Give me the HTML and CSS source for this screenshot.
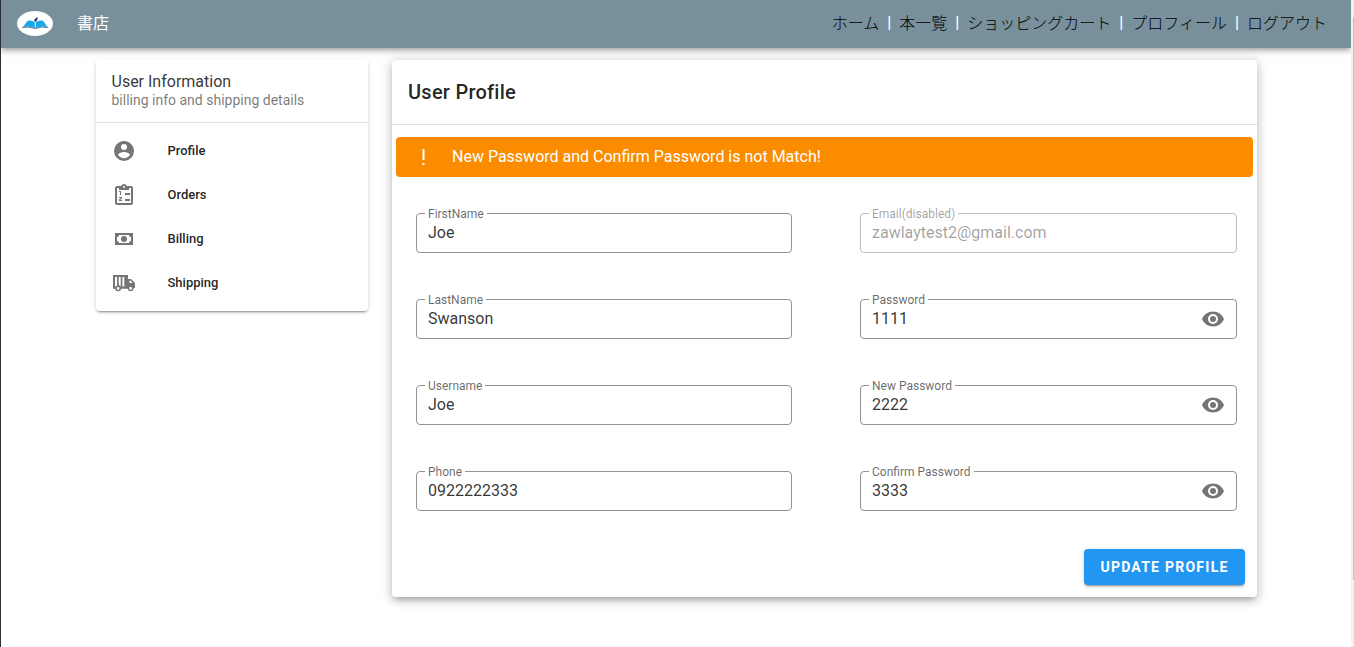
FILE: index.html
```
<!DOCTYPE html>
<html lang="ja">
<head>
<meta charset="utf-8">
<title>書店</title>
<link rel="stylesheet" href="styles.css">
</head>
<body>
<svg class="defs" aria-hidden="true">
  <symbol id="eye" viewBox="0 0 24 24"><path d="M12 9a3 3 0 0 0-3 3 3 3 0 0 0 3 3 3 3 0 0 0 3-3 3 3 0 0 0-3-3m0 8a5 5 0 0 1-5-5 5 5 0 0 1 5-5 5 5 0 0 1 5 5 5 5 0 0 1-5 5m0-12.500C7 4.500 2.730 7.610 1 12c1.730 4.390 6 7.500 11 7.500s9.270-3.110 11-7.500c-1.730-4.390-6-7.500-11-7.500z"/></symbol>
</svg>
<div class="app">
  <header class="bar">
    <svg class="logo" viewBox="0 0 36 26">
      <ellipse cx="18" cy="12.500" rx="18" ry="12.500" fill="#fff"/>
      <path d="M10.500 9.800Q15 8.800 18 11.500V17.200Q13 14.600 6 16Z" fill="#16a9e3"/>
      <path d="M26 9.800Q21.500 8.800 18.500 11.500V17.200Q23 14.600 30.500 16Z" fill="#16a9e3"/>
      <path d="M5.200 16.500Q13 15.200 17 17.300H19.500Q24 15.200 31.200 16.500" fill="none" stroke="#2a5188" stroke-width=".8"/>
      <path d="M17 10.300Q17.500 7.200 20.800 6Q20.800 8.800 18.800 10.800Z" fill="#30267c"/>
      <path d="M18.250 11V16.500" stroke="#d9f3ff" stroke-width=".8"/>
    </svg>
    <span class="brand">書店</span>
    <nav class="nav">
      <a>ホーム</a><i>|</i><a>本一覧</a><i>|</i><a>ショッピングカート</a><i>|</i><a>プロフィール</a><i>|</i><a>ログアウト</a>
    </nav>
  </header>
  <main class="content">
    <aside class="card side">
      <div class="side-head">
        <div class="side-title">User Information</div>
        <div class="side-sub">billing info and shipping details</div>
      </div>
      <ul class="menu">
        <li><svg class="icon" viewBox="0 0 24 24"><path d="M12 19.200c-2.500 0-4.710-1.280-6-3.200.03-2 4-3.100 6-3.100s5.970 1.100 6 3.100c-1.290 1.920-3.500 3.200-6 3.200M12 5a3 3 0 0 1 3 3 3 3 0 0 1-3 3 3 3 0 0 1-3-3 3 3 0 0 1 3-3m0-3A10 10 0 0 0 2 12a10 10 0 0 0 10 10 10 10 0 0 0 10-10C22 6.470 17.500 2 12 2z"/></svg><span>Profile</span></li>
        <li><svg class="icon" viewBox="0 0 24 24"><path d="M19 3H14.820C14.400 1.840 13.300 1 12 1S9.600 1.840 9.180 3H5A2 2 0 0 0 3 5V20A2 2 0 0 0 5 22H19A2 2 0 0 0 21 20V5A2 2 0 0 0 19 3M12 3A1 1 0 1 1 12 5A1 1 0 0 1 12 3M5 5H7V7H17V5H19V20H5ZM13 10H18V12H13ZM13 16H18V18H13ZM7 8H9V12H8V9H7ZM7 14H10V15.700L8 17H10V18H7V16.600L9 15H7Z" fill-rule="evenodd"/></svg><span>Orders</span></li>
        <li><svg class="icon" viewBox="0 0 24 24"><path d="M3 6H21V18H3V6M12 9A3 3 0 0 1 15 12A3 3 0 0 1 12 15A3 3 0 0 1 9 12A3 3 0 0 1 12 9M7 8A2 2 0 0 1 5 10V14A2 2 0 0 1 7 16H17A2 2 0 0 1 19 14V10A2 2 0 0 1 17 8H7Z"/></svg><span>Billing</span></li>
        <li><svg class="icon" viewBox="0 0 24 24"><path fill-rule="evenodd" d="M1 4H16V8H19L23 12V17H21.500A2.900 2.900 0 0 1 16 17.800H9A2.900 2.900 0 0 1 3.300 17.800H1ZM3 6V15.500H4A2.900 2.900 0 0 1 5 14.600V6ZM6.700 6V14.300A2.900 2.900 0 0 1 8.700 15.300V6ZM10.400 6V15.500H12.300V6ZM17.500 9.500V12H20.700L18.400 9.500Z"/><circle cx="6.100" cy="17.500" r="2.100" fill="#fff" stroke="#757575" stroke-width="1.400"/><circle cx="18.600" cy="17.500" r="2.100" fill="#fff" stroke="#757575" stroke-width="1.400"/></svg><span>Shipping</span></li>
      </ul>
    </aside>
    <section class="card profile">
      <h1 class="title">User Profile</h1>
      <div class="alert">
        <svg class="icon" viewBox="0 0 24 24"><path d="M10.500 4H12.500V15H10.500ZM10.500 18H12.500V20H10.500Z"/></svg>
        <span>New Password and Confirm Password is not Match!</span>
      </div>
      <form class="fields">
        <fieldset class="field"><legend>FirstName</legend><span>Joe</span></fieldset>
        <fieldset class="field disabled"><legend>Email(disabled)</legend><span>zawlaytest2@gmail.com</span></fieldset>
        <fieldset class="field"><legend>LastName</legend><span>Swanson</span></fieldset>
        <fieldset class="field"><legend>Password</legend><div class="value"><span>1111</span><svg class="icon"><use href="#eye"/></svg></div></fieldset>
        <fieldset class="field"><legend>Username</legend><span>Joe</span></fieldset>
        <fieldset class="field"><legend>New Password</legend><div class="value"><span>2222</span><svg class="icon"><use href="#eye"/></svg></div></fieldset>
        <fieldset class="field"><legend>Phone</legend><span>0922222333</span></fieldset>
        <fieldset class="field"><legend>Confirm Password</legend><div class="value"><span>3333</span><svg class="icon"><use href="#eye"/></svg></div></fieldset>
      </form>
      <div class="actions"><button class="btn" type="button">UPDATE PROFILE</button></div>
    </section>
  </main>
</div>
<div class="scroll"><div class="thumb"></div></div>
</body>
</html>
```
FILE: styles.css
```
* { box-sizing: border-box; }
body {
  margin: 0;
  height: 647px;
  display: flex;
  overflow: hidden;
  background: #fff;
  color: rgba(0, 0, 0, .87);
  font-family: Roboto, "Noto Sans CJK JP", sans-serif;
  font-size: 16px;
}
.defs { position: absolute; width: 0; height: 0; }
.app { flex: 1; border-left: 1px solid #263238; overflow: hidden; }
.scroll { width: 3px; padding: 17px 0 0 2px; background: #f1f1f1; }
.thumb { height: 563px; background: #c1c1c1; }

.bar {
  height: 48px;
  display: flex;
  align-items: center;
  padding: 0 24px 0 16px;
  background: #78909c;
  box-shadow: 0 2px 4px -1px rgba(0,0,0,.2), 0 4px 5px rgba(0,0,0,.14), 0 1px 10px rgba(0,0,0,.12);
}
.logo { width: 36px; height: 26px; }
.brand { margin-left: 24px; color: #fff; line-height: 24px; }
.nav { margin-left: auto; padding-bottom: 3px; display: flex; line-height: 24px; color: #000; font-family: "Noto Sans CJK JP", sans-serif; font-weight: 300; }
.nav i { width: 20px; text-align: center; color: #fff; font: 500 16px/25px Roboto, sans-serif; }

.content { display: flex; align-items: flex-start; gap: 24px; padding: 12px 0 0 95px; }
.card { background: #fff; border-radius: 4px; }
.icon { width: 24px; height: 24px; fill: #757575; flex: none; }

.side {
  width: 272px;
  height: 251px;
  box-shadow: 0 3px 1px -2px rgba(0,0,0,.2), 0 2px 2px rgba(0,0,0,.14), 0 1px 5px rgba(0,0,0,.12);
}
.side-head { height: 63px; padding: 12px 15px 0 15.500px; border-bottom: 1px solid #e0e0e0; }
.side-title { line-height: 19px; color: rgba(0,0,0,.8); }
.side-sub { font-size: 14px; line-height: 18px; color: rgba(0,0,0,.54); }
.menu { list-style: none; margin: 0; padding: 6px 0 0 15.500px; font-size: 13px; font-weight: 500; }
.menu li { height: 44px; display: flex; align-items: center; gap: 32px; }
.menu span, .alert span { padding-bottom: 2px; }

.profile {
  width: 865px;
  height: 537px;
  box-shadow: 0 5px 5px -3px rgba(0,0,0,.2), 0 3px 10px 1px rgba(0,0,0,.14), 0 2px 12px 2px rgba(0,0,0,.1);
}
.title {
  height: 65px;
  margin: 0;
  padding-left: 16px;
  border-bottom: 1px solid #e0e0e0;
  font-size: 20px;
  font-weight: 500;
  line-height: 64px;
  letter-spacing: .25px;
}
.alert {
  height: 40px;
  margin: 12px 4px 0;
  padding-left: 16px;
  display: flex;
  align-items: center;
  gap: 16px;
  border-radius: 4px;
  background: #fb8c00;
  color: #fff;
}
.alert .icon { fill: #fff; }
.fields {
  display: grid;
  grid-template-columns: 376px 377px;
  gap: 41px 68px;
  padding: 31px 0 0 24px;
}
.field {
  height: 45px;
  min-width: 0;
  margin: 0;
  padding: 0 11.500px 0 8px;
  border: 1px solid #949494;
  border-radius: 4px;
}
.field legend { height: 11px; padding: 0 3px; font-size: 12px; line-height: 12px; color: rgba(0,0,0,.6); }
.field > span, .value > span { display: block; padding-left: 3px; line-height: 28px; color: rgba(0,0,0,.8); }
.value { display: flex; justify-content: space-between; align-items: center; height: 28px; }
.disabled { border-color: #bdbdbd; }
.disabled legend, .disabled > span { color: rgba(0,0,0,.38); }
.actions { display: flex; justify-content: flex-end; padding: 38px 12px 0 0; }
.btn {
  width: 161px;
  height: 36px;
  padding: 0;
  border: 0;
  border-radius: 4px;
  background: #2196f3;
  color: #fff;
  font: 700 14px Roboto, sans-serif;
  letter-spacing: 1.25px;
  box-shadow: 0 3px 1px -2px rgba(0,0,0,.2), 0 2px 2px rgba(0,0,0,.14), 0 1px 5px rgba(0,0,0,.12);
}
```
